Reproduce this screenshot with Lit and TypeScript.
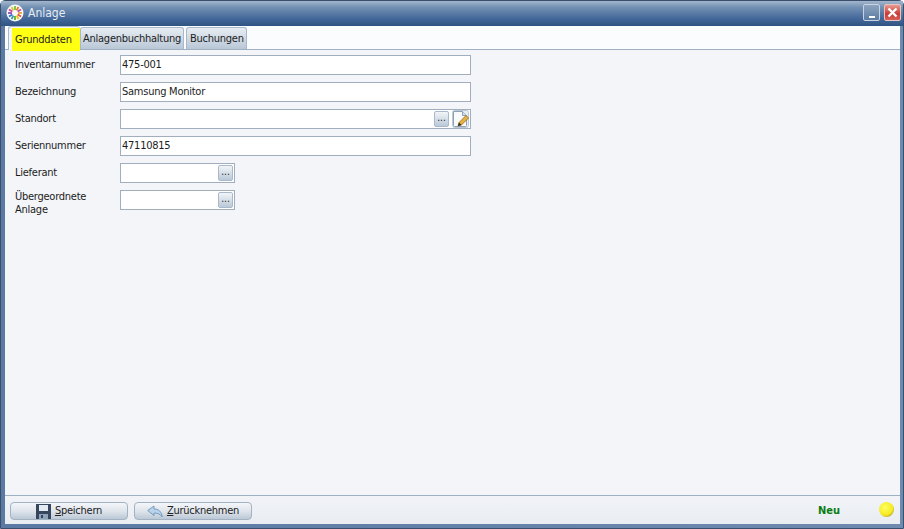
import { LitElement, html, css, svg } from "lit";
import { customElement } from "lit/decorators.js";

const dots = () => html`<button class="dots" tabindex="-1"><span>...</span></button>`;

@customElement("app-root")
export class AppRoot extends LitElement {
  static styles = css`
    :host { display: block; width: 904px; height: 529px; overflow: hidden; font-family: "DejaVu Sans Condensed", "DejaVu Sans", sans-serif; font-stretch: condensed; font-size: 11px; letter-spacing: -0.25px; color: #1c1c1c; }
    * { box-sizing: border-box; }
    .window { width: 904px; height: 529px; display: flex; flex-direction: column; background: linear-gradient(90deg, #5a79a3 0, #6f8aaf 100%); border: 1px solid #3a4f6e; border-radius: 5px 5px 0 0; }
    .title { height: 25px; flex: none; display: flex; align-items: center; padding: 0 2px 2px 5px; color: #e6ecf3; font-size: 12px; letter-spacing: 0; background: linear-gradient(180deg, #a3b7cd 0, #7391b3 25%, #44689a 70%, #2f5382 100%); }
    .logo { width: 18px; height: 18px; flex: none; margin-right: 4px; }
    .title .name { flex: 1; }
    .wbtn { width: 17px; height: 17px; border-radius: 2px; border: 1px solid #c7d3e0; display: flex; align-items: flex-end; justify-content: center; margin-left: 4px; background: linear-gradient(180deg, #8ea4bf, #5b7ba1); }
    .wbtn i { width: 6px; height: 2px; margin-bottom: 2px; background: #fff; display: block; }
    .wbtn.close { align-items: center; background: linear-gradient(180deg, #e79a92, #c83b33 60%, #d8605a); border-color: #e9c3c0; }
    .body { flex: 1; display: flex; flex-direction: column; margin: 0 3px 0 4px; background: #f3f5f9; min-height: 0; }
    .tabbar { height: 24px; flex: none; display: flex; align-items: flex-end; padding-left: 3px; background: #fbfcfd; border-bottom: 1px solid #9fb0c2; }
    .tab { height: 22px; display: flex; align-items: center; border: 1px solid #a9b9ca; border-bottom: none; border-radius: 3px 3px 0 0; background: linear-gradient(180deg, #e7edf3, #b9c7d6); }
    .tab.second { width: 104px; margin-right: 2px; padding-left: 2px; }
    .tab.third { width: 61px; padding-left: 3px; }
    .tab.active { width: 72px; height: 24px; background: #f3f5f9; padding: 1px 0 0 3px; margin-bottom: -1px; border-right: none; }
    .tab.active span { background: #ffff14; height: 23px; display: flex; align-items: center; padding: 0 0 0 3px; width: 68px; }
    .form { flex: 1; display: grid; grid-template-columns: 105px max-content; grid-auto-rows: 27px; padding: 5px 0 0 10px; align-content: start; }
    .label { height: 27px; padding-top: 3px; line-height: 13px; }
    .label.two { padding-top: 0; }
    .field { height: 20px; width: 351px; background: #fff; border: 1px solid #a0aebd; display: flex; align-items: center; padding: 0 1px; }
    .field.short { width: 115px; }
    .field .val { flex: 1; padding-bottom: 1px; }
    .dots { width: 15px; height: 16px; padding: 0; border: 1px solid #a9b9ca; border-radius: 2px; background: linear-gradient(180deg, #f2f5f8, #bac8d8); display: flex; justify-content: center; font: inherit; font-size: 10px; line-height: 12px; letter-spacing: 0; color: #222; }
    .edit { width: 17px; height: 18px; margin-left: 3px; flex: none; }
    .footer { height: 29px; flex: none; display: flex; align-items: flex-start; padding: 6px 0 0 5px; gap: 6px; border-top: 1px solid #9fb0c2; background: linear-gradient(180deg, #f1f3f7, #e9edf2); }
    .btn { height: 18px; width: 118px; display: flex; align-items: center; justify-content: center; gap: 4px; border: 1px solid #a3b2c3; border-radius: 4px; background: linear-gradient(180deg, #f4f6f9, #dfe5ec 50%, #bcc8d6); color: #222; }
    .btn span { padding-bottom: 1px; }
    .btn u { text-decoration: underline; }
    .status { margin-left: auto; display: flex; align-items: flex-start; }
    .neu { color: #0a7d12; font-weight: 700; width: 61px; line-height: 18px; letter-spacing: 0; }
    .led { width: 15px; height: 15px; margin-right: 6px; border-radius: 50%; background: radial-gradient(circle at 40% 36%, #ffff60, #f5ea20 58%, #c0ae28 76%, #6f6630); }
    .bottom { height: 4px; flex: none; }
  `;

  row(label: string, val: string) {
    return html`<div class="label">${label}</div><div class="field"><span class="val">${val}</span></div>`;
  }

  render() {
    const cols = ["#e8a33c", "#e84d3c", "#f2c014", "#5bb531", "#2fa0a8", "#2f6fd8", "#8f4bb8", "#d83d90", "#d8c83a", "#6cc04a", "#e8792a", "#b84ba0"];
    return html`<div class="window">
      <div class="title">
        <svg class="logo" viewBox="0 0 18 18"><circle cx="9" cy="9" r="8.500" fill="#f8f8f4" />${cols.map((c, i) => {
          const a = (i * Math.PI) / 6;
          return svg`<path d="M${9 + 3 * Math.cos(a)} ${9 + 3 * Math.sin(a)}L${9 + 7 * Math.cos(a)} ${9 + 7 * Math.sin(a)}" stroke=${c} stroke-width="1.800" />`;
        })}</svg>
        <span class="name">Anlage</span>
        <div class="wbtn"><i></i></div>
        <div class="wbtn close"><svg width="11" height="11" viewBox="0 0 11 11"><path d="M1.500 1.500l8 8M9.500 1.500l-8 8" stroke="#fff" stroke-width="2.400" /></svg></div>
      </div>
      <div class="body">
        <div class="tabbar">
          <div class="tab active"><span>Grunddaten</span></div>
          <div class="tab second">Anlagenbuchhaltung</div>
          <div class="tab third">Buchungen</div>
        </div>
        <div class="form">
          ${this.row("Inventarnummer", "475-001")}
          ${this.row("Bezeichnung", "Samsung Monitor")}
          <div class="label">Standort</div>
          <div class="field"><span class="val"></span>${dots()}
            <svg class="edit" viewBox="0 0 17 18"><rect x=".5" y=".5" width="16" height="17" rx="2" fill="#e8edf3" stroke="#bcc8d5" /><path d="M1.500 1.500h9l4 4v10q0 1-1 1h-11q-1 0-1-1z" fill="#f8fafc" stroke="#8fa0b3" /><path d="M10.500 1.500v4h4" fill="#d5dde7" stroke="#8fa0b3" /><path d="M6 16l1-3.500 7-7 2.500 2.500-7 7z" fill="#e8b23c" stroke="#8a5f16" stroke-width=".7" /><path d="M6 16l1-3.500 2.500 2.500z" fill="#2b2b2b" /></svg>
          </div>
          ${this.row("Seriennummer", "47110815")}
          <div class="label">Lieferant</div>
          <div class="field short"><span class="val"></span>${dots()}</div>
          <div class="label two">Übergeordnete<br />Anlage</div>
          <div class="field short"><span class="val"></span>${dots()}</div>
        </div>
        <div class="footer">
          <div class="btn">
            <svg width="15" height="15" viewBox="0 0 15 15"><path d="M0 0h15v15H0z" fill="#36465c" /><path d="M3 1h9v6H3z" fill="#e4eaf1" /><path d="M3 10h9v5H3z" fill="#8ea3ba" /><path d="M5 11h2v3H5z" fill="#36465c" /></svg>
            <span><u>S</u>peichern</span>
          </div>
          <div class="btn">
            <svg width="16" height="13" viewBox="0 0 16 13"><path d="M.7 5.500 7 1v3c4.500 0 7.500 2.500 8.300 8-2-2.800-4.500-4-8.300-4v2.500z" fill="#b8d3ec" stroke="#6f93b8" stroke-width=".9" /></svg>
            <span><u>Z</u>urücknehmen</span>
          </div>
          <div class="status"><span class="neu">Neu</span><div class="led"></div></div>
        </div>
      </div>
      <div class="bottom"></div>
    </div>`;
  }
}
